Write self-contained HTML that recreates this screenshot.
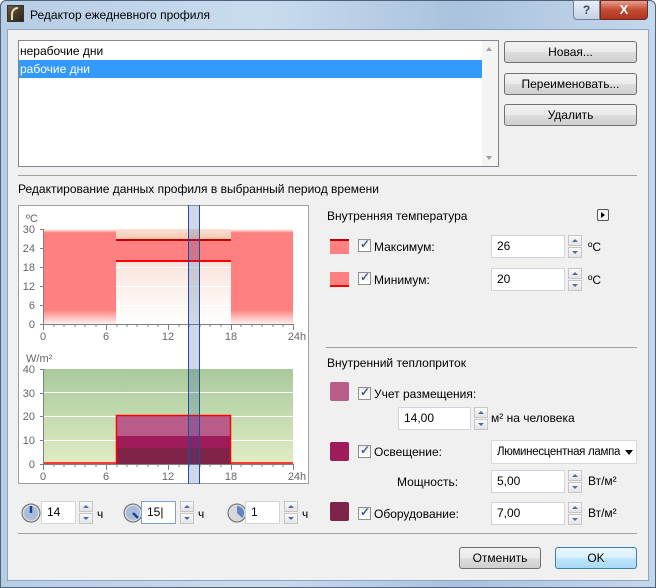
<!DOCTYPE html>
<html><head><meta charset="utf-8"><style>
*{box-sizing:border-box;margin:0;padding:0}
body{width:656px;height:588px;overflow:hidden;font-family:"Liberation Sans",sans-serif;font-size:12px;color:#000;background:#fff;position:relative}
.a{position:absolute;white-space:nowrap}
.btn{position:absolute;border:1px solid #707070;border-radius:3px;background:linear-gradient(#f2f2f2 0,#ebebeb 48%,#dddddd 52%,#cfcfcf 100%);text-align:center;font-size:12px}
.fld{position:absolute;background:#fff;border:1px solid #d0d4dc;padding-left:5px;height:23px;line-height:21px}
.sp{position:absolute;width:14px;height:23px}
.sp div{position:absolute;left:0;width:14px;height:11px;border:1px solid #c6c6c6;background:linear-gradient(#fafafa,#e4e4e4)}
.sp div:after{content:"";position:absolute;left:3px;border-left:3px solid transparent;border-right:3px solid transparent}
.sp .u{top:0}.sp .u:after{top:3px;border-bottom:3px solid #4a6fa5}
.sp .d{top:12px}.sp .d:after{top:3px;border-top:3px solid #4a6fa5}
.cb{position:absolute;width:13px;height:13px;border:1px solid #8f8f8f;background:linear-gradient(#eee,#fff)}
.cb:after{content:"✓";position:absolute;left:1px;top:-3px;font-size:12px;font-weight:bold;color:#4a5f97}
.sw{position:absolute;width:19px;height:15px}
</style></head><body>
<div class="a" style="left:0;top:0;width:656px;height:588px;background:linear-gradient(90deg,#b7cde4,#c9dcef 40%,#a9c2dd 70%,#c4d8ec);border:1px solid #50637a;border-radius:6px 6px 0 0"></div>
<div class="a" style="left:7px;top:29px;width:642px;height:552px;background:#f0f0f0;border:1px solid #8ea3bd"></div>
<div class="a" style="left:7px;top:5px;width:17px;height:17px;background:linear-gradient(135deg,#6a5a40,#2a2418);border:1px solid #333"></div>
<div class="a" style="left:11px;top:7px;width:7px;height:13px;border-left:2px solid #e8d8b0;border-top:2px solid #e8d8b0;border-radius:8px 0 0 0"></div>
<div class="a" style="left:30px;top:8px;font-size:12px">Редактор ежедневного профиля</div>
<div class="a" style="left:573px;top:0;width:27px;height:20px;border:1px solid #6d7f96;border-radius:0 0 0 4px;background:linear-gradient(#e8eef6,#c6d3e3);text-align:center;font-weight:bold;color:#3a4d66;line-height:18px">?</div>
<div class="a" style="left:600px;top:0;width:48px;height:20px;border:1px solid #6b2c24;border-radius:0 0 4px 0;background:linear-gradient(#e8a090,#c44a32 50%,#b03420);text-align:center;font-weight:bold;color:#fff;line-height:18px;font-size:13px">X</div>

<div class="a" style="left:18px;top:40px;width:481px;height:127px;background:#fff;border:1px solid #828790"></div>
<div class="a" style="left:20px;top:44px">нерабочие дни</div>
<div class="a" style="left:19px;top:60px;width:463px;height:18px;background:#3399ff;color:#fff;padding-left:1px;line-height:18px">рабочие дни</div>
<div class="a" style="left:482px;top:41px;width:16px;height:125px;background:#f4f4f4"></div>
<div class="a" style="left:486px;top:47px;border-left:3px solid transparent;border-right:3px solid transparent;border-bottom:4px solid #a0a0a0"></div>
<div class="a" style="left:486px;top:156px;border-left:3px solid transparent;border-right:3px solid transparent;border-top:4px solid #a0a0a0"></div>
<div class="btn" style="left:504px;top:41px;width:133px;height:22px;line-height:20px">Новая...</div>
<div class="btn" style="left:504px;top:73px;width:133px;height:22px;line-height:20px">Переименовать...</div>
<div class="btn" style="left:504px;top:104px;width:133px;height:22px;line-height:20px">Удалить</div>

<div class="a" style="left:18px;top:175px;width:619px;height:1px;background:#a0a0a0"></div>
<div class="a" style="left:18px;top:182px">Редактирование данных профиля в выбранный период времени</div>

<svg class="a" style="left:18px;top:205px" width="291" height="285" viewBox="18 205 291 285">
<defs>
<linearGradient id="rf" x1="0" y1="0" x2="0" y2="1"><stop offset="0" stop-color="#fff"/><stop offset="0.04" stop-color="#ff8080"/><stop offset="0.85" stop-color="#ff8080"/><stop offset="1" stop-color="#fff0f0"/></linearGradient>
<linearGradient id="mf" x1="0" y1="0" x2="0" y2="1"><stop offset="0" stop-color="#f5d5c8"/><stop offset="1" stop-color="#fff"/></linearGradient>
<linearGradient id="pk" x1="0" y1="0" x2="0" y2="1"><stop offset="0" stop-color="#fae0d4"/><stop offset="1" stop-color="#f8c4ac"/></linearGradient>
<linearGradient id="gf" x1="0" y1="0" x2="0" y2="1"><stop offset="0" stop-color="#a9c99c"/><stop offset="1" stop-color="#e0ecc4"/></linearGradient>
</defs>
<rect x="18.5" y="205.5" width="290" height="278" fill="#fff" stroke="#a0a0a0"/>
<rect x="43" y="229" width="250" height="95" fill="url(#rf)"/>
<rect x="116" y="229" width="115" height="95" fill="url(#mf)"/>
<rect x="116" y="229" width="115" height="11" fill="url(#pk)"/>
<rect x="116" y="240" width="115" height="21" fill="#ff8080"/>
<g stroke="#fff" stroke-width="1"><line x1="116" y1="267.5" x2="231" y2="267.5"/><line x1="116" y1="286.5" x2="231" y2="286.5"/><line x1="116" y1="305.5" x2="231" y2="305.5"/></g>
<line x1="116" y1="240" x2="231" y2="240" stroke="#cc0000" stroke-width="2"/>
<line x1="116" y1="261" x2="231" y2="261" stroke="#ff0000" stroke-width="2"/>
<rect x="43" y="369" width="250" height="95" fill="url(#gf)"/>
<g stroke="#fff"><line x1="43" y1="392.5" x2="293" y2="392.5"/><line x1="43" y1="416.5" x2="293" y2="416.5"/><line x1="43" y1="440.5" x2="293" y2="440.5"/></g>
<rect x="116" y="416" width="115" height="20" fill="#b85c8a"/>
<rect x="116" y="436" width="115" height="12" fill="#9e1c5a"/>
<rect x="116" y="448" width="115" height="16" fill="#7e2448"/>
<polyline points="43,463 116.5,463 116.5,415.5 230.5,415.5 230.5,463 293,463" fill="none" stroke="#ff0000" stroke-width="1.5"/>
<g stroke="#808080" fill="none">
<path d="M43.5 229V324.5H293M43.5 369V464.5H293"/>
<path d="M40 229.5h4M40 248.5h4M40 267.5h4M40 286.5h4M40 305.5h4M40 324.5h4M40 369.5h4M40 393.5h4M40 416.5h4M40 440.5h4M40 464.5h4"/>
<path d="M43.5 324v6M106.5 324v6M168.5 324v6M231.5 324v6M293.5 324v6M43.5 464v6M106.5 464v6M168.5 464v6M231.5 464v6M293.5 464v6"/>
<path d="M54 324v3M64 324v3M75 324v3M85 324v3M96 324v3M117 324v3M127 324v3M137 324v3M148 324v3M158 324v3M179 324v3M189 324v3M200 324v3M210 324v3M221 324v3M241 324v3M252 324v3M262 324v3M273 324v3M283 324v3M54 464v3M64 464v3M75 464v3M85 464v3M96 464v3M117 464v3M127 464v3M137 464v3M148 464v3M158 464v3M179 464v3M189 464v3M200 464v3M210 464v3M221 464v3M241 464v3M252 464v3M262 464v3M273 464v3M283 464v3"/>
</g>
<g font-family="Liberation Sans" font-size="11" fill="#666">
<text x="26" y="222">ºC</text><text x="26" y="362">W/m²</text>
<g text-anchor="end"><text x="35" y="233">30</text><text x="35" y="252">24</text><text x="35" y="271">18</text><text x="35" y="290">12</text><text x="35" y="309">6</text><text x="35" y="328">0</text>
<text x="35" y="373">40</text><text x="35" y="397">30</text><text x="35" y="420">20</text><text x="35" y="444">10</text><text x="35" y="468">0</text></g>
<g text-anchor="middle"><text x="43" y="340">0</text><text x="106" y="340">6</text><text x="168" y="340">12</text><text x="231" y="340">18</text><text x="297" y="340">24h</text>
<text x="43" y="480">0</text><text x="106" y="480">6</text><text x="168" y="480">12</text><text x="231" y="480">18</text><text x="297" y="480">24h</text></g>
</g>
<rect x="188" y="205" width="11" height="279" fill="#1f4f9f" fill-opacity="0.22"/>
<line x1="188.5" y1="205" x2="188.5" y2="484" stroke="#1d4fa0"/>
<line x1="199.5" y1="205" x2="199.5" y2="484" stroke="#1d4fa0"/>
</svg>

<svg class="a" style="left:20px;top:502px" width="300" height="22">
<circle cx="11" cy="11" r="9" fill="#d8d8d8" stroke="#666"/><circle cx="11" cy="11" r="7" fill="#a9bddb"/>
<path d="M11 11V4" stroke="#1840a0" stroke-width="2.5"/>
<circle cx="113" cy="11" r="9" fill="#d8d8d8" stroke="#666"/><circle cx="113" cy="11" r="7" fill="#a9bddb"/>
<path d="M113 11l5 5" stroke="#1840a0" stroke-width="2.5"/>
<circle cx="217" cy="11" r="9" fill="#d8d8d8" stroke="#666"/><path d="M217 11V4A7 7 0 0 1 222 16Z" fill="#5f86c0"/>
</svg>
<div class="fld" style="left:41px;top:501px;width:35px">14</div>
<div class="sp" style="left:79px;top:501px"><div class="u"></div><div class="d"></div></div>
<div class="a" style="left:97px;top:507px">ч</div>
<div class="fld" style="left:141px;top:501px;width:35px;border-color:#7da2ce">15|</div>
<div class="sp" style="left:180px;top:501px"><div class="u"></div><div class="d"></div></div>
<div class="a" style="left:198px;top:507px">ч</div>
<div class="fld" style="left:245px;top:501px;width:35px">1</div>
<div class="sp" style="left:284px;top:501px"><div class="u"></div><div class="d"></div></div>
<div class="a" style="left:302px;top:507px">ч</div>

<div class="a" style="left:327px;top:209px">Внутренняя температура</div>
<div class="a" style="left:597px;top:209px;width:12px;height:12px;border:1px solid #555;border-radius:2px;background:#f4f4f4"></div>
<div class="a" style="left:601px;top:212px;border-top:3px solid transparent;border-bottom:3px solid transparent;border-left:4px solid #000"></div>

<div class="sw" style="left:330px;top:239px;background:#ff8080;border-top:2px solid #c00000"></div>
<div class="cb" style="left:358px;top:239px"></div><div class="a" style="left:374px;top:240px">Максимум:</div>
<div class="fld" style="left:491px;top:235px;width:74px">26</div>
<div class="sp" style="left:568px;top:235px"><div class="u"></div><div class="d"></div></div>
<div class="a" style="left:588px;top:240px">ºC</div>

<div class="sw" style="left:330px;top:272px;background:#ff8080;border-bottom:2px solid #ff0000"></div>
<div class="cb" style="left:358px;top:272px"></div><div class="a" style="left:374px;top:273px">Минимум:</div>
<div class="fld" style="left:491px;top:268px;width:74px">20</div>
<div class="sp" style="left:568px;top:268px"><div class="u"></div><div class="d"></div></div>
<div class="a" style="left:588px;top:273px">ºC</div>

<div class="a" style="left:326px;top:347px;width:311px;height:1px;background:#a0a0a0"></div>
<div class="a" style="left:327px;top:356px">Внутренний теплоприток</div>

<div class="sw" style="left:330px;top:382px;width:19px;height:19px;border-radius:2px;background:#b85c8a"></div>
<div class="cb" style="left:358px;top:387px"></div><div class="a" style="left:374px;top:387px">Учет размещения:</div>
<div class="fld" style="left:398px;top:407px;width:73px">14,00</div>
<div class="sp" style="left:474px;top:407px"><div class="u"></div><div class="d"></div></div>
<div class="a" style="left:491px;top:411px">м² на человека</div>

<div class="sw" style="left:330px;top:442px;width:19px;height:19px;border-radius:2px;background:#9e1c5a"></div>
<div class="cb" style="left:358px;top:445px"></div><div class="a" style="left:374px;top:445px">Освещение:</div>
<div class="a" style="left:491px;top:440px;width:146px;height:24px;background:#fff;border:1px solid #d8d8d8;padding-left:5px;line-height:22px;font-size:11.5px;letter-spacing:-0.3px;overflow:hidden">Люминесцентная лампа</div>
<div class="a" style="left:625px;top:450px;border-left:4px solid transparent;border-right:4px solid transparent;border-top:5px solid #000"></div>

<div class="a" style="left:397px;top:475px">Мощность:</div>
<div class="fld" style="left:491px;top:470px;width:74px">5,00</div>
<div class="sp" style="left:568px;top:470px"><div class="u"></div><div class="d"></div></div>
<div class="a" style="left:588px;top:474px">Вт/м²</div>

<div class="sw" style="left:330px;top:502px;width:19px;height:19px;border-radius:2px;background:#7e2448"></div>
<div class="cb" style="left:358px;top:507px"></div><div class="a" style="left:374px;top:507px">Оборудование:</div>
<div class="fld" style="left:491px;top:502px;width:74px">7,00</div>
<div class="sp" style="left:568px;top:502px"><div class="u"></div><div class="d"></div></div>
<div class="a" style="left:588px;top:506px">Вт/м²</div>

<div class="a" style="left:18px;top:533px;width:619px;height:1px;background:#a0a0a0"></div>
<div class="btn" style="left:459px;top:547px;width:82px;height:22px;line-height:20px">Отменить</div>
<div class="btn" style="left:555px;top:547px;width:82px;height:22px;line-height:20px;border-color:#3c7fb1;background:linear-gradient(#eaf6fd,#d9f0fc 48%,#bee6fd 52%,#a7d9f5)">OK</div>
</body></html>
